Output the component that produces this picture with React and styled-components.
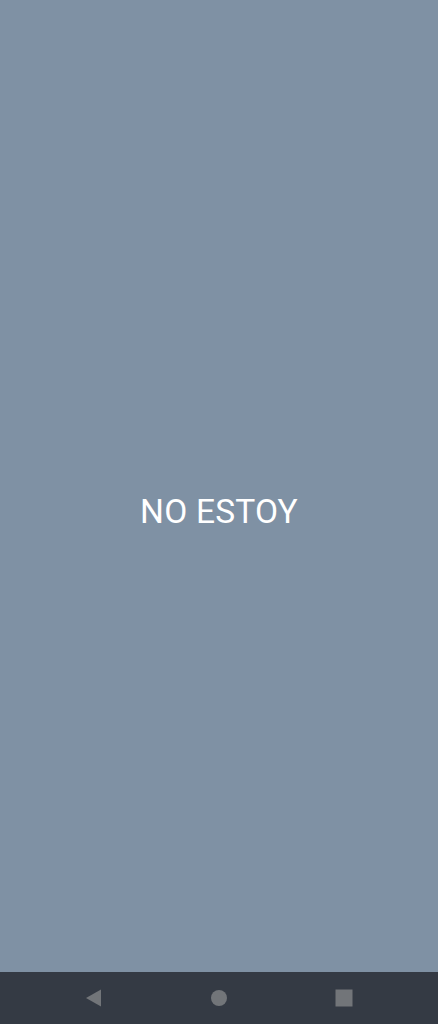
import styled, { createGlobalStyle } from 'styled-components'

const GlobalStyle = createGlobalStyle`
  html, body {
    margin: 0;
    padding: 0;
    height: 100%;
  }
  body {
    font-family: Roboto, "Noto Sans", sans-serif;
    background-color: #7f91a4;
  }
`

const Screen = styled.div`
  width: 100%;
  height: 1024px;
  display: flex;
  flex-direction: column;
`

const Content = styled.main`
  flex: 1;
  display: flex;
  align-items: center;
  justify-content: center;
  background-color: #7f91a4;
  padding-top: 50px;
`

const Message = styled.h1`
  margin: 0;
  font-size: 33.5px;
  font-weight: 400;
  color: #ffffff;
  letter-spacing: 0.2px;
`

const NavBar = styled.nav`
  height: 52px;
  background-color: #343a44;
  display: grid;
  grid-template-columns: repeat(3, 1fr);
  align-items: center;
  justify-items: center;
  padding: 0 31px;
`

const NavIcon = styled.svg`
  width: 18px;
  height: 18px;
  fill: #727579;
`

function App() {
  return (
    <Screen>
      <GlobalStyle />
      <Content>
        <Message>NO ESTOY</Message>
      </Content>
      <NavBar>
        <NavIcon viewBox="0 0 18 18">
          <path d="M16 0.5 L16 17.5 L1 9 Z" />
        </NavIcon>
        <NavIcon viewBox="0 0 18 18">
          <circle cx="9" cy="9" r="8" />
        </NavIcon>
        <NavIcon viewBox="0 0 18 18">
          <rect x="0.5" y="0.5" width="17" height="17" />
        </NavIcon>
      </NavBar>
    </Screen>
  )
}

export default App
